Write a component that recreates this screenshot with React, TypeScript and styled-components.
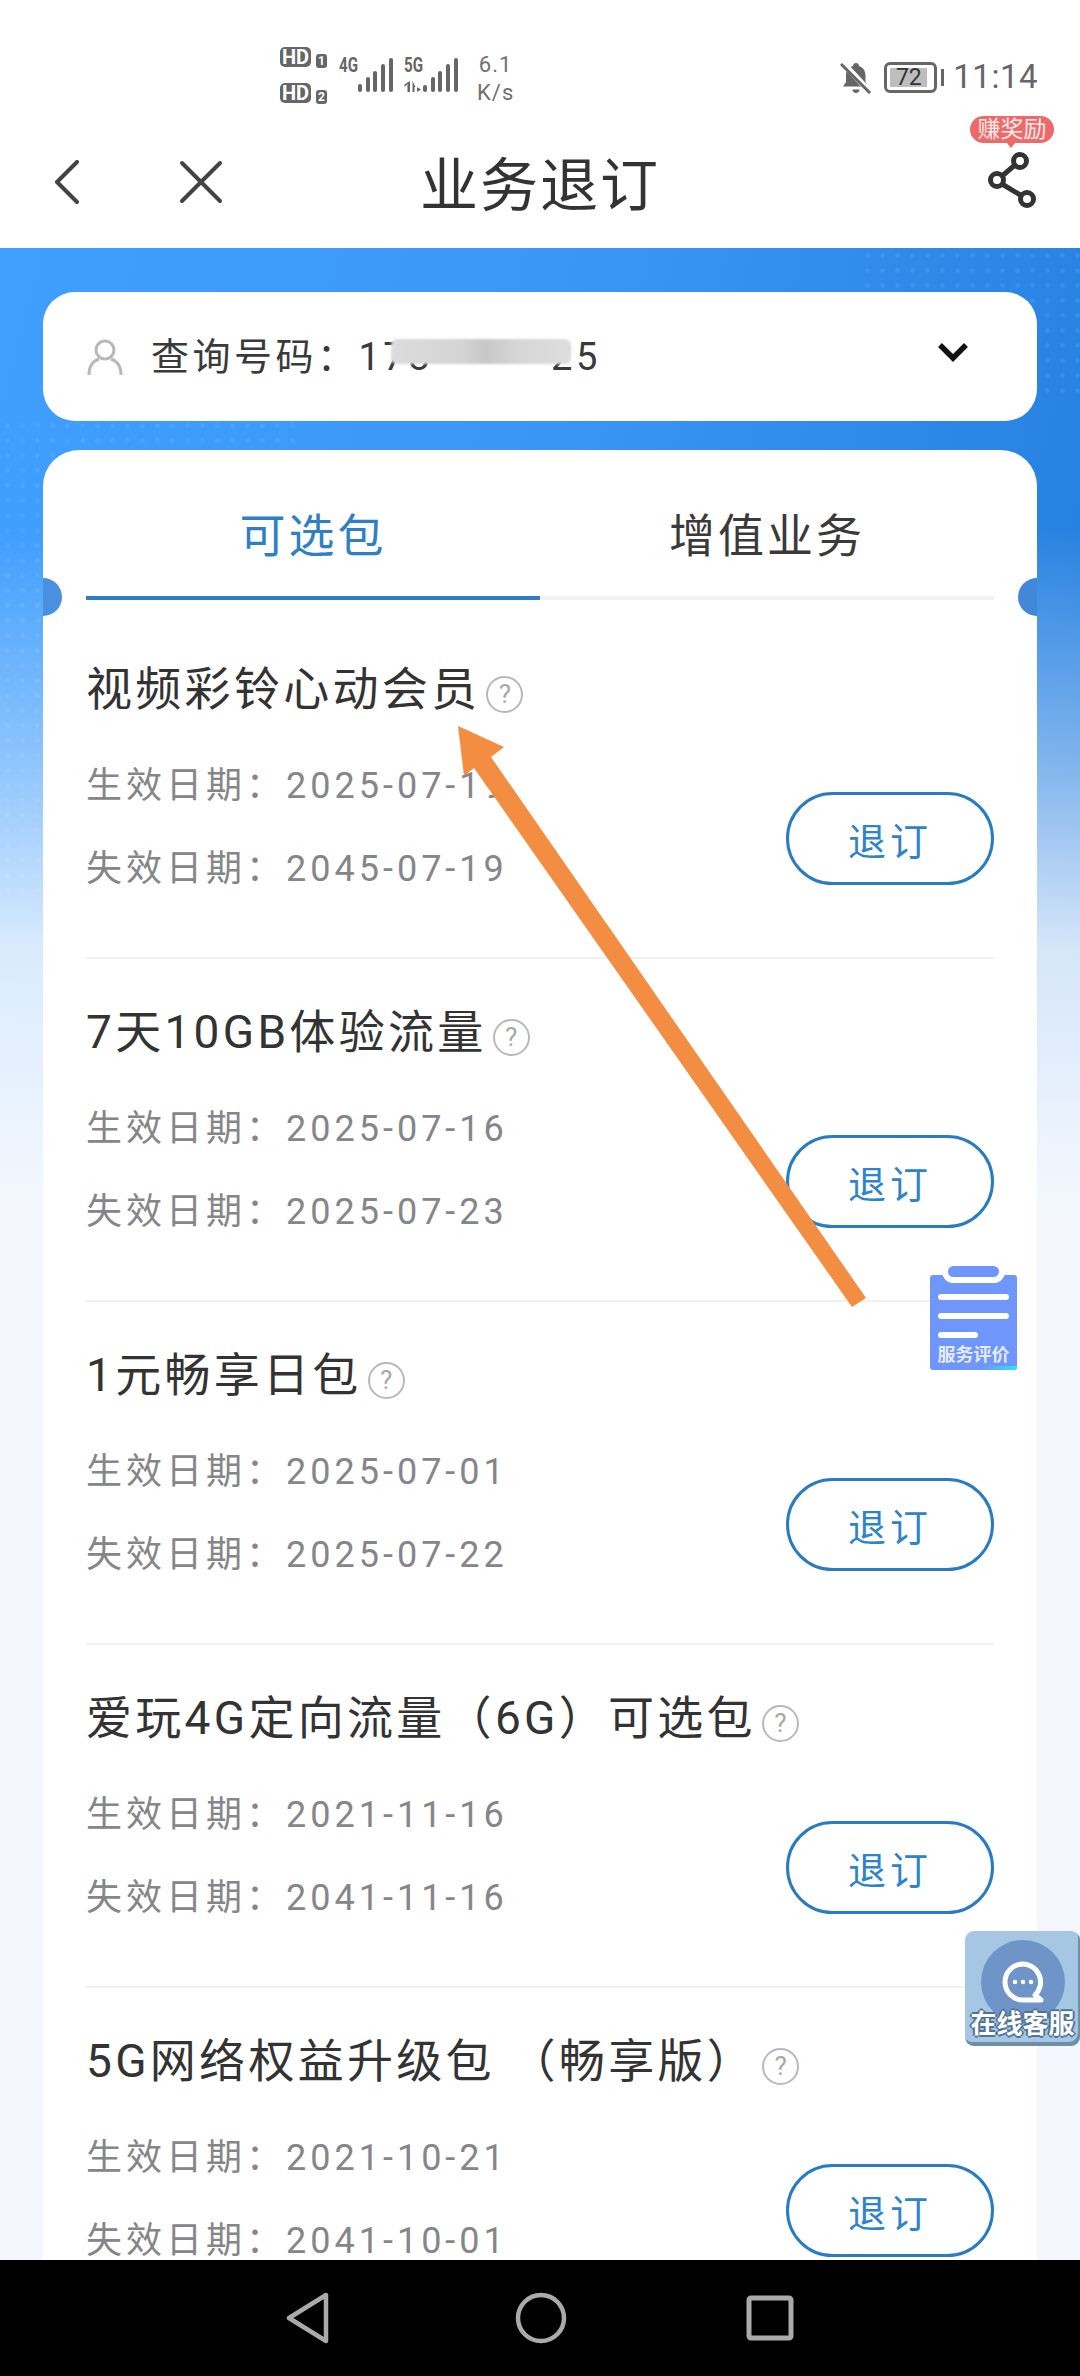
import styled, { createGlobalStyle } from 'styled-components';

interface Subscription {
  name: string;
  start: string;
  end: string;
}

const subscriptions: Subscription[] = [
  { name: '视频彩铃心动会员', start: '2025-07-19', end: '2045-07-19' },
  { name: '7天10GB体验流量', start: '2025-07-16', end: '2025-07-23' },
  { name: '1元畅享日包', start: '2025-07-01', end: '2025-07-22' },
  { name: '爱玩4G定向流量（6G）可选包', start: '2021-11-16', end: '2041-11-16' },
  { name: '5G网络权益升级包 （畅享版）', start: '2021-10-21', end: '2041-10-01' },
];

const GlobalStyle = createGlobalStyle`
  html, body {
    margin: 0;
    padding: 0;
    background: #fff;
  }
  * {
    box-sizing: border-box;
  }
`;

const Page = styled.div`
  position: relative;
  width: 1080px;
  height: 2376px;
  display: flex;
  flex-direction: column;
  overflow: hidden;
  background: #fff;
  font-family: Roboto, 'Noto Sans CJK SC', sans-serif;
  color: #333;
`;

const StatusBar = styled.div`
  height: 118px;
  flex: none;
  display: flex;
  align-items: flex-start;
  padding: 47px 42px 0 280px;
  color: #666;
`;

const SimGroup = styled.div`
  display: flex;
  flex-direction: column;
  gap: 16px;
`;

const SimRow = styled.div`
  display: flex;
  align-items: flex-end;
  gap: 5px;
`;

const HdBadge = styled.span`
  width: 31px;
  height: 20px;
  border-radius: 5px;
  background: #666;
  color: #fff;
  font-size: 20px;
  line-height: 20px;
  font-weight: 700;
  text-align: center;
`;

const SimNumber = styled.span`
  width: 11px;
  height: 14px;
  margin-bottom: -1px;
  border-radius: 3px;
  background: #666;
  color: #fff;
  font-size: 12px;
  line-height: 14px;
  font-weight: 700;
  text-align: center;
`;

const SignalIcon = styled.svg<{ $gap: number }>`
  flex: none;
  margin: 5px 0 0 ${(p) => p.$gap}px;
`;

const Speed = styled.div`
  margin: 4px 0 0 17px;
  font-size: 22px;
  line-height: 28px;
  letter-spacing: 1px;
  text-align: center;
  color: #707070;
`;

const StatusRight = styled.div`
  margin-left: auto;
  margin-top: 12px;
  display: flex;
  align-items: center;
`;

const Battery = styled.div`
  position: relative;
  width: 53px;
  height: 31px;
  margin-left: 12px;
  padding: 3px;
  border: 3px solid #666;
  border-radius: 6px;
  &::after {
    content: '';
    position: absolute;
    right: -10px;
    top: 4px;
    width: 3px;
    height: 17px;
    background: #666;
  }
`;

const BatteryFill = styled.div`
  width: 37px;
  height: 19px;
  background: #bdbdbd;
  color: #333;
  font-size: 23px;
  line-height: 19px;
  text-align: center;
`;

const Clock = styled.span`
  margin-left: 16px;
  font-size: 33px;
  line-height: 36px;
  letter-spacing: 0.5px;
  color: #666;
`;

const Header = styled.header`
  position: relative;
  height: 130px;
  flex: none;
  display: flex;
  align-items: center;
  justify-content: center;
  padding-top: 5px;
`;

const HeaderLeft = styled.div`
  position: absolute;
  left: 54px;
  top: 42px;
  display: flex;
  gap: 100px;
`;

const Title = styled.h1`
  margin: 0;
  font-size: 58px;
  line-height: 70px;
  font-weight: 400;
  letter-spacing: 2px;
  color: #333;
`;

const ShareArea = styled.div`
  position: absolute;
  left: 970px;
  top: -2px;
  width: 84px;
`;

const RewardBadge = styled.div`
  position: relative;
  height: 27px;
  border-radius: 14px;
  background: #ee6a6a;
  color: #fdeaea;
  font-size: 23px;
  line-height: 27px;
  text-align: center;
  &::after {
    content: '';
    position: absolute;
    left: 36px;
    bottom: -5px;
    border-left: 5px solid transparent;
    border-right: 5px solid transparent;
    border-top: 6px solid #ee6a6a;
  }
`;

const ShareIcon = styled.svg`
  display: block;
  margin: 8px 0 0 13px;
`;

const Main = styled.main`
  position: relative;
  flex: 1;
  min-height: 0;
  overflow: hidden;
  padding: 44px 43px 0;
  background:
    linear-gradient(
      to bottom,
      rgba(244, 248, 254, 0) 280px,
      rgba(244, 248, 254, 0.45) 520px,
      rgba(244, 248, 254, 0.85) 700px,
      #f4f8fe 960px
    ),
    linear-gradient(105deg, #3f9fff 0%, #3b97f6 35%, #1f79d9 85%, #1f79d9 100%);
`;

const Dots = styled.div<{ $side: 'left' | 'right' }>`
  position: absolute;
  ${(p) =>
    p.$side === 'left'
      ? 'left: 0; top: 170px; width: 300px; height: 480px;'
      : 'right: 0; top: 0; width: 220px; height: 150px;'}
  background-image: radial-gradient(rgba(255, 255, 255, 0.08) 2px, transparent 2.5px);
  background-size: 15px 15px;
`;

const QueryCard = styled.section`
  position: relative;
  height: 129px;
  display: flex;
  align-items: center;
  padding: 0 69px 0 44px;
  border-radius: 32px;
  background: #fff;
`;

const PhoneLabel = styled.div`
  margin-left: 28px;
  display: flex;
  align-items: center;
  font-size: 38px;
  line-height: 50px;
  letter-spacing: 3.5px;
  color: #3a3a3a;
`;

const PhoneMask = styled.span`
  position: relative;
  display: inline-block;
  width: 118px;
  height: 50px;
  &::after {
    content: '';
    position: absolute;
    left: -42px;
    right: -20px;
    top: 7px;
    height: 25px;
    border-radius: 6px;
    background: linear-gradient(
      to right,
      #dcdcdc 0,
      #d4d4d4 40%,
      #c8c8c8 52%,
      #d6d6d6 70%,
      #dedede 100%
    );
    filter: blur(1px);
  }
`;

const ChevronIcon = styled.svg`
  margin-left: auto;
  margin-bottom: 9px;
`;

const ListCard = styled.section`
  position: relative;
  margin-top: 29px;
  padding: 0 43px;
  height: 1900px;
  border-radius: 36px;
  background: #fff;
  overflow: hidden;
  &::before,
  &::after {
    content: '';
    position: absolute;
    top: 128px;
    width: 38px;
    height: 38px;
    border-radius: 50%;
  }
  &::before {
    left: -19px;
    background: #4a90e0;
  }
  &::after {
    right: -19px;
    background: #4287d8;
  }
`;

const TabBar = styled.div`
  display: flex;
  border-bottom: 4px solid #f3f3f3;
`;

const Tab = styled.div<{ $active?: boolean }>`
  flex: 1;
  height: 150px;
  margin-bottom: -4px;
  padding-top: 26px;
  border-bottom: 4px solid ${(p) => (p.$active ? '#2f7cc4' : 'transparent')};
  font-size: 46px;
  line-height: 120px;
  letter-spacing: 3px;
  text-align: center;
  color: ${(p) => (p.$active ? '#2f7fc6' : '#3a3a3a')};
`;

const List = styled.div`
  margin-top: 16px;
`;

const Row = styled.div`
  height: 343px;
  display: flex;
  justify-content: space-between;
  padding-top: 43px;
  border-bottom: 2px solid #f1f1f1;
`;

const RowInfo = styled.div`
  flex: 1;
  min-width: 0;
  display: flex;
  flex-direction: column;
`;

const RowTitle = styled.div`
  display: flex;
  align-items: center;
  margin-bottom: 26px;
  font-size: 46px;
  line-height: 60px;
  letter-spacing: 3.3px;
  color: #333;
  white-space: pre;
`;

const HelpMark = styled.span`
  flex: none;
  width: 37px;
  height: 37px;
  margin: 10px 0 0 6px;
  border: 2.5px solid #b9b9b9;
  border-radius: 50%;
  color: #a8a8a8;
  font-size: 26px;
  line-height: 32px;
  letter-spacing: 0;
  text-align: center;
`;

const DateLine = styled.div`
  margin: 21px 0;
  font-size: 36px;
  line-height: 41px;
  letter-spacing: 4px;
  color: #85868a;
  white-space: nowrap;
`;

const CancelButton = styled.button`
  flex: none;
  width: 208px;
  height: 93px;
  margin-top: 133px;
  border: 3px solid #2a7cc2;
  border-radius: 47px;
  background: #fff;
  color: #2f83cb;
  font-family: inherit;
  font-size: 38px;
  letter-spacing: 4px;
  padding: 0;
`;

const ReviewFloat = styled.div`
  position: absolute;
  left: 930px;
  top: 1275px;
  width: 87px;
  height: 95px;
  padding: 19px 8px 0;
  border-radius: 3px;
  background: #6e96fb;
  overflow: hidden;
`;

const ReviewClip = styled.div`
  position: absolute;
  left: 942px;
  top: 1260px;
  width: 63px;
  height: 23px;
  border: 6px solid #fff;
  border-top-width: 6px;
  border-radius: 12px;
  background: #6e96fb;
`;

const ReviewLine = styled.div<{ $short?: boolean }>`
  width: ${(p) => (p.$short ? '40px' : '71px')};
  height: 6px;
  margin-bottom: 13px;
  border-radius: 3px;
  background: #fff;
`;

const ReviewText = styled.div`
  margin: -7px -4px 0;
  font-size: 18px;
  line-height: 22px;
  font-weight: 700;
  color: #e6ecff;
  text-align: center;
  white-space: nowrap;
`;

const ReviewAccent = styled.div`
  position: absolute;
  right: 0;
  bottom: 0;
  width: 34px;
  height: 4px;
  background: linear-gradient(to right, #6e96fb, #2ce6ee);
`;

const ChatFloat = styled.div`
  position: absolute;
  left: 965px;
  top: 1931px;
  width: 115px;
  height: 115px;
  padding-top: 9px;
  border-radius: 9px;
  background: #a6c7e4;
  box-shadow: inset -2px -4px 0 #6f8fa8;
  text-align: center;
`;

const ChatCircle = styled.div`
  width: 84px;
  height: 84px;
  margin: 0 auto;
  padding-top: 21px;
  border-radius: 50%;
  background: #6f94c8;
`;

const ChatText = styled.div`
  position: absolute;
  left: 0;
  right: 0;
  top: 77px;
  font-size: 26px;
  line-height: 32px;
  font-weight: 700;
  color: #fff;
  white-space: nowrap;
  text-shadow:
    2px 0 0 #4f7396,
    -2px 0 0 #4f7396,
    0 2px 0 #4f7396,
    0 -2px 0 #4f7396;
`;

const ArrowMark = styled.svg`
  position: absolute;
  left: 0;
  top: 0;
  pointer-events: none;
`;

const NavBar = styled.nav`
  height: 116px;
  flex: none;
  display: flex;
  align-items: center;
  justify-content: center;
  gap: 182px;
  background: #000;
`;

const HomeKey = styled.svg`
  margin: 0 -3px 0 3px;
`;

export default function App() {
  return (
    <Page>
      <GlobalStyle />
      <StatusBar>
        <SimGroup>
          <SimRow>
            <HdBadge>HD</HdBadge>
            <SimNumber>1</SimNumber>
          </SimRow>
          <SimRow>
            <HdBadge>HD</HdBadge>
            <SimNumber>2</SimNumber>
          </SimRow>
        </SimGroup>
        <SignalIcon $gap={12} width="56" height="42" viewBox="0 -4 56 42" fill="#666">
          <text x="0" y="16" fontSize="20" fontWeight="700" fontFamily="Roboto, sans-serif" textLength="19" lengthAdjust="spacingAndGlyphs">4G</text>
          <rect x="19" y="28" width="4" height="8" rx="2" />
          <rect x="27" y="21" width="4" height="15" rx="2" />
          <rect x="34" y="15" width="4" height="21" rx="2" />
          <rect x="42" y="8" width="4" height="28" rx="2" />
          <rect x="50" y="2" width="4" height="34" rx="2" />
        </SignalIcon>
        <SignalIcon $gap={9} width="56" height="42" viewBox="0 -4 56 42" fill="#666">
          <text x="0" y="16" fontSize="20" fontWeight="700" fontFamily="Roboto, sans-serif" textLength="19" lengthAdjust="spacingAndGlyphs">5G</text>
          <path d="M6 25v11h-2.500v-8l-3 3v-2.500zM8.500 25l3 6h-1v5h-2zM13 31l4 2.500-4 2.500z" />
          <rect x="19" y="29" width="4" height="7" rx="2" />
          <rect x="27" y="21" width="4" height="15" rx="2" />
          <rect x="34" y="15" width="4" height="21" rx="2" />
          <rect x="42" y="8" width="4" height="28" rx="2" />
          <rect x="50" y="2" width="4" height="34" rx="2" />
        </SignalIcon>
        <Speed>
          6.1
          <br />
          K/s
        </Speed>
        <StatusRight>
          <svg width="32" height="33" viewBox="0 0 32 33" fill="#666">
            <path d="M16 2c2 0 3 1.500 3 3 5 1.500 6.500 6 6.500 10v6l3 4.500H3l3-4.500v-7C6 9 9 6.500 13 5c0-1.500 1-3 3-3z" />
            <path d="M12.500 28.500h7c0 2-1.500 3.500-3.500 3.500s-3.500-1.500-3.500-3.500z" />
            <path d="M2 1l28 30" stroke="#fff" strokeWidth="6" />
            <path d="M1 3l29 29" stroke="#666" strokeWidth="3" />
          </svg>
          <Battery>
            <BatteryFill>72</BatteryFill>
          </Battery>
          <Clock>11:14</Clock>
        </StatusRight>
      </StatusBar>

      <Header>
        <HeaderLeft>
          <svg width="25" height="44" viewBox="0 0 25 44" fill="none" stroke="#444" strokeWidth="4" strokeLinecap="round" strokeLinejoin="round">
            <path d="M23 2L3 22l20 20" />
          </svg>
          <svg width="44" height="44" viewBox="0 0 44 44" fill="none" stroke="#444" strokeWidth="4" strokeLinecap="round">
            <path d="M3 3l38 38M41 3L3 41" />
          </svg>
        </HeaderLeft>
        <Title>业务退订</Title>
        <ShareArea>
          <RewardBadge>赚奖励</RewardBadge>
          <ShareIcon width="60" height="62" viewBox="0 0 60 62" fill="none" stroke="#333" strokeWidth="5">
            <path d="M32 14L19 25M19 33l20 12" />
            <circle cx="37" cy="10" r="6.500" />
            <circle cx="14" cy="29" r="6.500" />
            <circle cx="44" cy="48" r="6.500" />
          </ShareIcon>
        </ShareArea>
      </Header>

      <Main>
        <Dots $side="left" />
        <Dots $side="right" />
        <QueryCard>
          <svg width="36" height="36" viewBox="0 0 36 36" fill="none" stroke="#b8b8b8" strokeWidth="3">
            <circle cx="18" cy="11" r="9" />
            <path d="M2 36c0-9 4-14 10-16M34 36c0-9-4-14-10-16" />
          </svg>
          <PhoneLabel>
            查询号码：178
            <PhoneMask />
            25
          </PhoneLabel>
          <ChevronIcon width="30" height="20" viewBox="0 0 30 20" fill="none" stroke="#111" strokeWidth="5.500">
            <path d="M2 3l13 13L28 3" />
          </ChevronIcon>
        </QueryCard>

        <ListCard>
          <TabBar>
            <Tab $active>可选包</Tab>
            <Tab>增值业务</Tab>
          </TabBar>
          <List>
            {subscriptions.map((item) => (
              <Row key={item.name}>
                <RowInfo>
                  <RowTitle>
                    {item.name}
                    <HelpMark>?</HelpMark>
                  </RowTitle>
                  <DateLine>生效日期：{item.start}</DateLine>
                  <DateLine>失效日期：{item.end}</DateLine>
                </RowInfo>
                <CancelButton>退订</CancelButton>
              </Row>
            ))}
          </List>
        </ListCard>
      </Main>

      <NavBar>
        <svg width="44" height="52" viewBox="0 0 44 52" fill="none" stroke="#aaa" strokeWidth="4.500" strokeLinejoin="round">
          <path d="M40 3v46L3 26z" />
        </svg>
        <HomeKey width="52" height="52" viewBox="0 0 52 52" fill="none" stroke="#aaa" strokeWidth="4.500">
          <circle cx="26" cy="26" r="23" />
        </HomeKey>
        <svg width="48" height="46" viewBox="0 0 48 46" fill="none" stroke="#aaa" strokeWidth="5" strokeLinejoin="round">
          <rect x="3" y="3" width="42" height="40" rx="2" />
        </svg>
      </NavBar>

      <ArrowMark width="1080" height="2376" viewBox="0 0 1080 2376">
        <polygon fill="#f28d42" points="458,726 504,747 491,757 866,1298 852,1307 474,768 464,776" />
      </ArrowMark>

      <ReviewFloat>
        <ReviewLine />
        <ReviewLine />
        <ReviewLine $short />
        <ReviewText>服务评价</ReviewText>
        <ReviewAccent />
      </ReviewFloat>
      <ReviewClip />

      <ChatFloat>
        <ChatCircle>
          <svg width="46" height="46" viewBox="0 0 46 46" fill="none" stroke="#fff" strokeWidth="5">
            <path d="M23 3a18 18 0 1 0 0 36h18l-6-5a18 18 0 0 0-12-31z" strokeLinejoin="round" />
            <circle cx="15" cy="21" r="1.500" fill="#fff" strokeWidth="1.500" />
            <circle cx="23" cy="21" r="1.500" fill="#fff" strokeWidth="1.500" />
            <circle cx="31" cy="21" r="1.500" fill="#fff" strokeWidth="1.500" />
          </svg>
        </ChatCircle>
        <ChatText>在线客服</ChatText>
      </ChatFloat>
    </Page>
  );
}
